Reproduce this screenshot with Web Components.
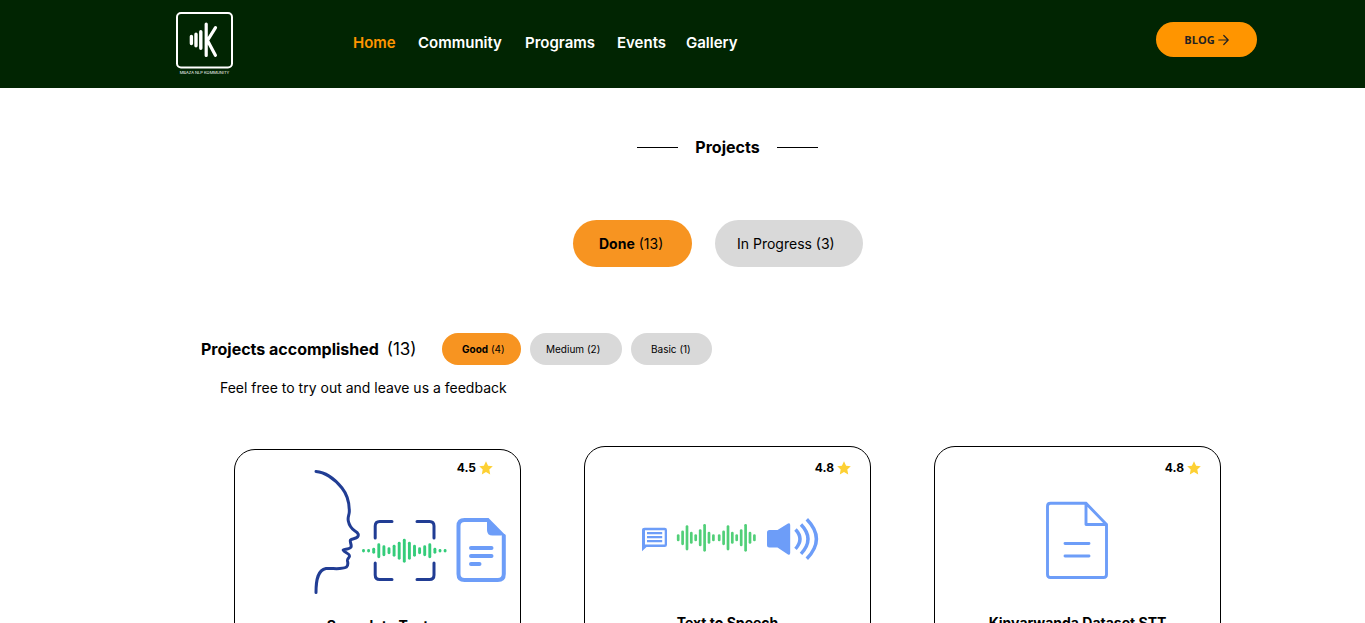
<!DOCTYPE html>
<html lang="en">
<head>
<meta charset="utf-8">
<meta name="viewport" content="width=device-width, initial-scale=1">
<title>Projects</title>
<style>
body { margin: 0; background: #fff; color: #000; font-family: Inter, "Liberation Sans", sans-serif; }
</style>
</head>
<body>
<site-header></site-header>
<projects-page></projects-page>
<script>
const define = (name, html) => {
  const template = document.createElement('template');
  template.innerHTML = html;
  customElements.define(name, class extends HTMLElement {
    constructor() {
      super();
      this.attachShadow({ mode: 'open' }).append(template.content.cloneNode(true));
    }
  });
};

// A row of vertical rounded bars: [x, half height] around a middle line.
const bars = (list, y, width, color) => list.map(([x, h]) =>
  `<path d="M${x} ${y - h}V${y + h}" stroke="${color}" stroke-width="${width}" stroke-linecap="round"/>`).join('');

define('site-logo', `
<style>
  :host { display: block; }
  a { display: flex; flex-direction: column; align-items: center; width: 57px; color: #fff; text-decoration: none; }
  svg { display: block; }
  span { font-size: 4px; line-height: 8px; font-weight: 400; white-space: nowrap; }
</style>
<a href="#home" aria-label="Mbaza NLP Community">
  <svg width="57" height="57" viewBox="0 0 57 57" fill="none" stroke="#fff" stroke-linecap="round">
    <rect x="1" y="1" width="55" height="54.500" rx="4" stroke-width="2"/>
    <path d="M15.400 24.400v7.200M20 22.300v11.400M24.800 19.700v16.600" stroke-width="3.400"/>
    <path d="M30.200 12v31.500M39.500 15.700L31.500 28.500l7.900 14.800" stroke-width="3.200"/>
  </svg>
  <span>MBAZA NLP KOMMUNITY</span>
</a>`);

define('site-header', `
<style>
  :host { display: block; background: #012502; }
  header { display: flex; box-sizing: border-box; min-height: 88px; padding: 12px 108px 11px 176px; align-items: flex-start; }
  nav { display: grid; grid-template-columns: 42px 84px 69px 46px 50px; gap: 23px; margin: 20px auto 0 120px; }
  nav a { font-size: 15px; line-height: 21px; font-weight: 600; color: #fff; text-decoration: none; white-space: nowrap; }
  nav a[aria-current] { color: #ff9500; }
  button { display: flex; align-items: center; justify-content: center; gap: 3px; width: 101px; height: 35px; margin-top: 10px; padding: 0; border: 0; border-radius: 18px; background: #ff9500; color: #222; font: 700 11px/16px "Open Sans", sans-serif; }
</style>
<header>
  <site-logo></site-logo>
  <nav>
    <a href="#home" aria-current="page">Home</a>
    <a href="#community">Community</a>
    <a href="#programs">Programs</a>
    <a href="#events">Events</a>
    <a href="#gallery">Gallery</a>
  </nav>
  <button type="button">BLOG
    <svg width="11" height="12" viewBox="0 0 11 12" fill="none" stroke="#222" stroke-width="1.2" stroke-linecap="round" stroke-linejoin="round"><path d="M.8 6h9.200M5.800 1.500L10.200 6l-4.400 4.500"/></svg>
  </button>
</header>`);

define('pill-button', `
<style>
  :host { display: block; }
  button { display: block; box-sizing: border-box; width: 100%; height: var(--pill-height, 47px); padding: 0 0 0 var(--pill-pad, 0); border: 0; border-radius: 24px; background: var(--pill-color, #d9d9d9); color: #000; font: inherit; text-align: left; white-space: nowrap; }
  ::slotted(b) { font-weight: 700; }
</style>
<button type="button"><slot></slot></button>`);

define('star-rating', `
<style>
  :host { display: flex; justify-content: flex-end; align-items: center; gap: 3px; font-size: 12px; line-height: 16px; font-weight: 700; }
  svg { display: block; }
</style>
<slot></slot>
<svg width="14" height="14" viewBox="0 0 14 14" fill="#fdd033"><path d="M7 .3l2.100 4.500 4.700.5-3.500 3.300.9 4.900L7 11.100l-4.200 2.400.9-4.900L.2 5.300l4.700-.5z"/></svg>`);

define('project-card', `
<style>
  :host { display: block; box-sizing: border-box; border: 1px solid #000; border-radius: 21px; padding: 13px 0 40px; }
  ::slotted(star-rating) { margin-right: var(--rating-inset, 19px); }
  ::slotted(svg) { display: block; width: 100%; height: auto; }
  h3 { margin: 0; font-size: 14px; line-height: 22px; font-weight: 700; text-align: center; }
</style>
<slot name="rating"></slot>
<slot name="art"></slot>
<h3><slot></slot></h3>`);

define('projects-page', `
<style>
  :host { display: block; padding: 49px 0 40px 90px; }
  .title { display: flex; justify-content: center; align-items: center; gap: 17px; }
  .title::before, .title::after { content: ""; width: 41px; height: 1px; background: #000; }
  h1 { margin: 0; font-size: 16px; line-height: 21px; font-weight: 700; }
  .tabs { display: flex; justify-content: center; gap: 23px; margin: 62px 19px 0 0; font-size: 14px; }
  .tabs pill-button { --pill-pad: 22px; width: 148px; }
  .tabs pill-button:first-child { --pill-pad: 26px; width: 119px; }
  .on { --pill-color: #f79421; }
  section { max-width: 1053px; margin: 66px auto 0; }
  .bar { display: flex; align-items: center; }
  h2 { width: 241px; margin: 0; font-size: 16px; line-height: 22px; font-weight: 700; white-space: nowrap; }
  h2 span { font-size: 17px; font-weight: 400; margin-left: 4px; }
  .filters { display: grid; grid-template-columns: 79px 92px 81px; gap: 9px; font-size: 10px; --pill-height: 32px; --pill-pad: 20px; }
  .filters .wide { --pill-pad: 16px; }
  p { margin: 13px 0 0 19px; font-size: 14px; line-height: 20px; }
  .cards { display: grid; grid-template-columns: repeat(auto-fit, 287px); justify-content: center; gap: 63px; margin-top: 48px; }
  .low { margin-top: 3px; padding-top: 10px; --rating-inset: 27px; }
</style>
<main>
  <div class="title"><h1>Projects</h1></div>
  <div class="tabs">
    <pill-button class="on"><b>Done</b> (13)</pill-button>
    <pill-button>In Progress (3)</pill-button>
  </div>
  <section>
    <div class="bar">
      <h2>Projects accomplished <span>(13)</span></h2>
      <div class="filters">
        <pill-button class="on"><b>Good</b> (4)</pill-button>
        <pill-button class="wide">Medium (2)</pill-button>
        <pill-button>Basic (1)</pill-button>
      </div>
    </div>
    <p>Feel free to try out and leave us a feedback</p>
    <div class="cards">
      <project-card class="low">
        <star-rating slot="rating">4.5</star-rating>
        <svg slot="art" viewBox="235 476 285 139" overflow="visible" fill="none" stroke-linecap="round" stroke-linejoin="round">
          <path stroke="#213d94" stroke-width="3" d="M316 471.500C324 472 334 478 342 488C348 495.500 349.500 503 349.300 512C349 516 347.500 517 348.300 521C349.300 526 352 529 355 531C358.500 533 359 535 357.500 537C356 539 352 538.500 350.500 540C349.500 542 352 545 351 547C349.500 549.500 345 549 343.200 550C344 552.500 349 553 349.500 555.500C350 557.500 347 558.500 347.500 561C348 563 348.500 565 346.500 567C341 570 333 568 326 568.500C318 570 316 579 316 592.500"/>
          <path stroke="#213d94" stroke-width="3" d="M375.200 538v-12q0-4.500 4.500-4.500H392M417 521.500h12.500q4.500 0 4.500 4.500v12M434 563v12q0 4.500-4.500 4.500H417M392 579.500h-12.300q-4.500 0-4.500-4.500v-12"/>
          ${bars([[363.500,.3],[368.600,.3],[373.700,1.500],[378.800,6],[383.900,4],[389,2],[394.100,4.500],[399.200,7.500],[404.300,10.500],[409.400,7.500],[414.500,4.500],[419.600,2],[424.700,4],[429.800,6],[434.900,1.500],[440,.3],[445.100,.3]], 550.700, 2.900, '#34cc7a')}
          <path stroke="#6d9df8" stroke-width="4" d="M487 520h-22.500q-6 0-6 6v48q0 6 6 6h33.300q6 0 6-6v-38"/>
          <path fill="#6d9df8" d="M487 518h1.500l17.300 17.500h-13.300q-5.500 0-5.500-5.500z"/>
          <path stroke="#6d9df8" stroke-width="4" d="M471 548h20.500M471 556h20.500M471 564h8.500"/>
        </svg>
        Speech to Text
      </project-card>
      <project-card>
        <star-rating slot="rating">4.8</star-rating>
        <svg slot="art" viewBox="585 476 285 136" fill="none" stroke-linecap="round" stroke-linejoin="round">
          <path fill="#6d9df8" fill-rule="evenodd" d="M644.700 527.800h20q2.300 0 2.300 2.300v14.600q0 2.300-2.300 2.300H646.500l-4.500 4.300v-21.200q0-2.300 2.700-2.300zM645 530.200v14.300h19.700v-14.300z"/>
          <path stroke="#6d9df8" stroke-width="2.200" stroke-linecap="butt" d="M647 533.200h15.200M647 537.200h15.200M647 541.200h15.200"/>
          ${bars([[678.200,2.200],[682.600,6],[687,11.300],[691.300,4.700],[695.700,2.200],[700.200,7.200],[704.600,12.500],[709,4.700],[713.400,2.200],[719.200,2.200],[723.600,6],[728,11.300],[732.300,4.700],[736.700,2.200],[741.200,7.200],[745.600,12.500],[750,4.700],[754.400,2.200]], 537.800, 2.700, '#51cf78')}
          <path fill="#6d9df8" d="M769.500 530H777.500L788 523.500Q790.200 522.500 790.200 525V553Q790.200 555.500 788 554.500L777.500 547.500H769.500Q767 547.500 767 545V532.500Q767 530 769.500 530z"/>
          <path stroke="#6d9df8" stroke-width="3.400" stroke-linecap="butt" d="M795.500 529.500Q804.500 539 795.500 548.800M801 524.500Q815 539 801 553.800M806.800 519.300Q826 539 806.800 558.800"/>
        </svg>
        Text to Speech
      </project-card>
      <project-card>
        <star-rating slot="rating">4.8</star-rating>
        <svg slot="art" viewBox="935 476 285 136" fill="none" stroke="#6d9df8" stroke-width="2.900" stroke-linecap="round" stroke-linejoin="round">
          <path d="M1086 503.300h-35.500q-3 0-3 3v68.200q0 3 3 3h53q3 0 3-3V524.500zM1086 503.300V524.500h20.500M1065 543.500h24M1065 556h24"/>
        </svg>
        Kinyarwanda Dataset STT
      </project-card>
    </div>
  </section>
</main>`);
</script>
</body>
</html>
